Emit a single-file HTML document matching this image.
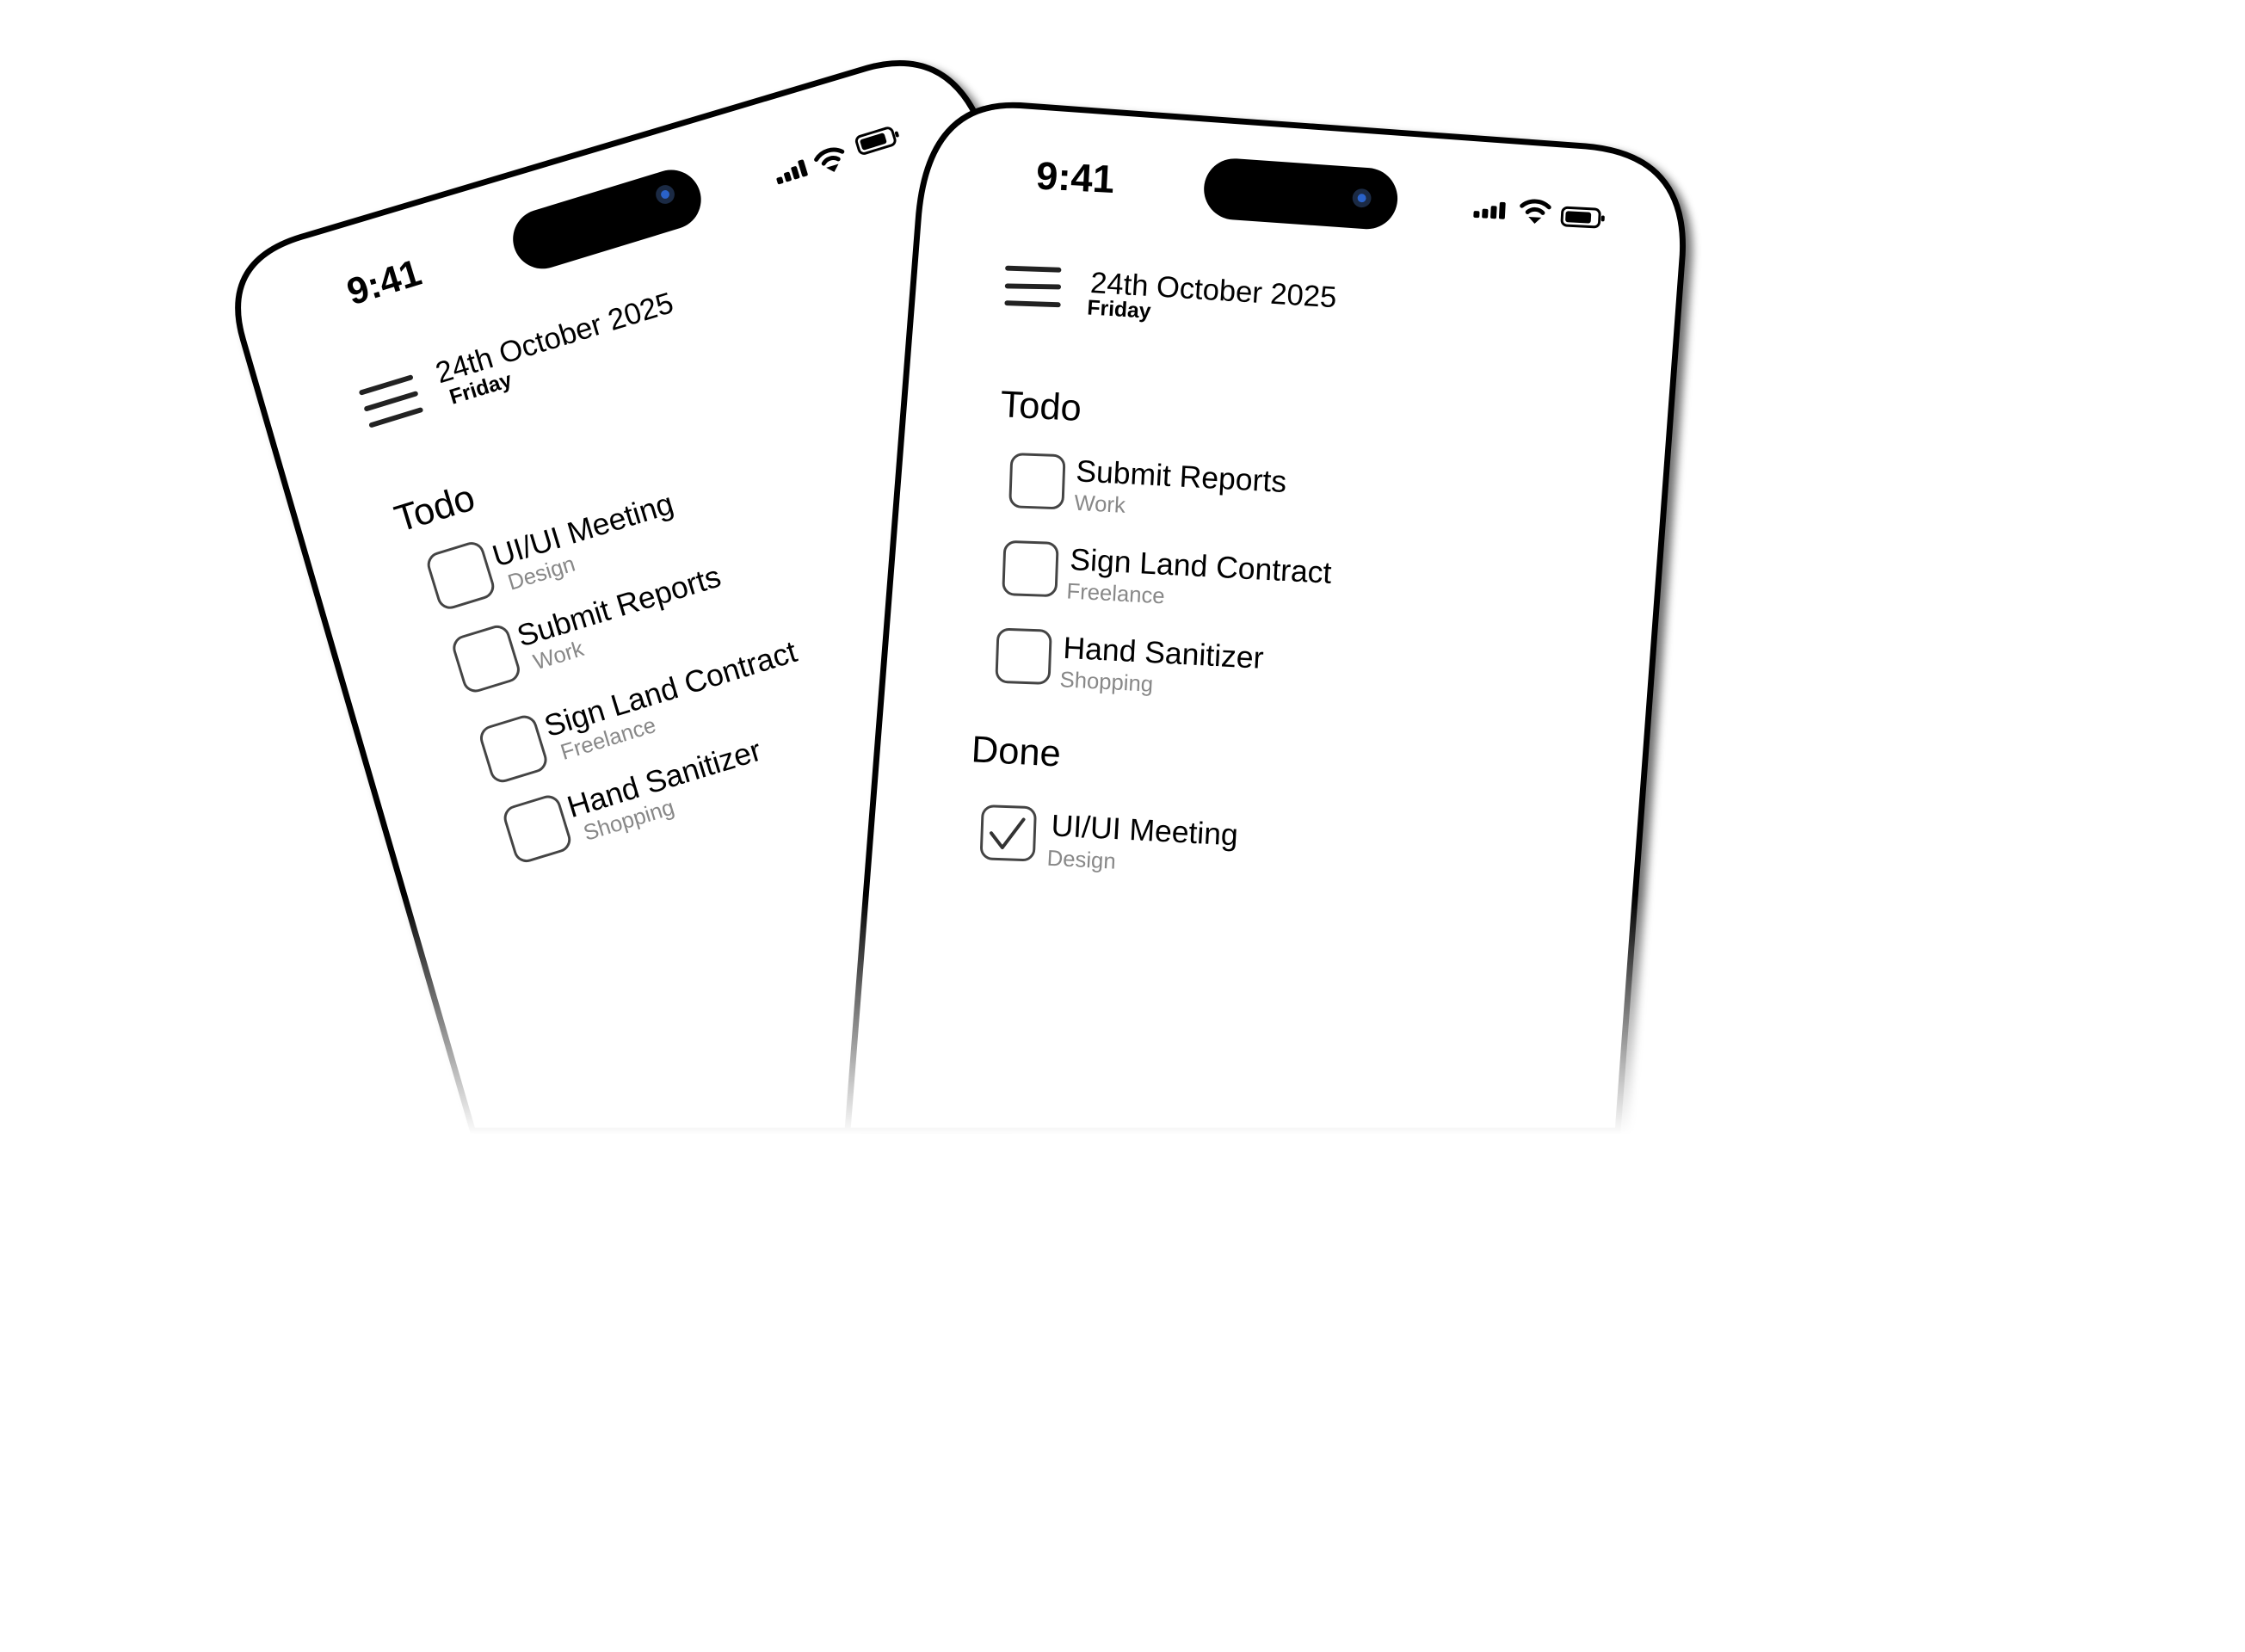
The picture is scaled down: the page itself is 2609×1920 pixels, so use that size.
<!DOCTYPE html>
<html><head><meta charset="utf-8"><style>
html,body{margin:0;padding:0;background:#fff;width:2609px;height:1920px;overflow:hidden}
svg{display:block}
text{font-family:"Liberation Sans",sans-serif}
</style></head><body>
<svg width="2609" height="1920" viewBox="0 0 2609 1920" xmlns="http://www.w3.org/2000/svg">
<defs>
<filter id="sh" x="-10%" y="-10%" width="130%" height="130%">
<feGaussianBlur in="SourceAlpha" stdDeviation="5"/><feOffset dx="8" dy="6"/>
<feComponentTransfer><feFuncA type="linear" slope="0.55"/></feComponentTransfer>
<feMerge><feMergeNode/><feMergeNode in="SourceGraphic"/></feMerge></filter>
<linearGradient id="fade" x1="0" y1="0" x2="0" y2="1">
<stop offset="0" stop-color="#fff" stop-opacity="0"/><stop offset="1" stop-color="#fff" stop-opacity="1"/></linearGradient>
<g id="sig"><rect x="0" y="10" width="7" height="8" rx="2"/><rect x="10" y="7" width="7" height="11" rx="2"/><rect x="20" y="3" width="7" height="15" rx="2"/><rect x="30" y="-2" width="7" height="20" rx="2"/></g>
<g id="wifi" fill="none" stroke="#000" stroke-width="5" stroke-linecap="round"><path d="M-16,-2 A24,24 0 0 1 16,-2"/><path d="M-9,5 A13,13 0 0 1 9,5"/><path d="M-4,12 L0,16 L4,12 Z" fill="#000" stroke-width="3"/></g>
<g id="bat"><rect x="0" y="0" width="44" height="21" rx="6" fill="none" stroke="#000" stroke-width="3"/><rect x="4" y="4" width="30" height="13" rx="3"/><rect x="46" y="7" width="4" height="7" rx="2"/></g>
</defs>
<g transform="scale(0.988)">
<!-- LEFT PHONE -->
<path filter="url(#sh)" d="M556,1330 L286,400 Q258,305 360,277 L1020,80 Q1110,55 1150,140 L1190,1330 Z" fill="#fff" stroke="#000" stroke-width="7"/>
<g transform="rotate(-17 714 258)"><rect x="600" y="223" width="228" height="70" rx="35" fill="#000"/><circle cx="788" cy="250" r="11" fill="#1b2a44"/><circle cx="788" cy="250" r="5" fill="#2a62c9"/></g>
<text x="414" y="359" font-size="44" font-weight="bold" transform="rotate(-17 414 359)">9:41</text>
<use href="#sig" transform="translate(910,200) rotate(-17)"/>
<use href="#wifi" transform="translate(976,185) rotate(-17)"/>
<use href="#bat" transform="translate(1006,162) rotate(-17)"/>
<g transform="translate(460,472) rotate(-17)" stroke="#222" stroke-width="6" stroke-linecap="round"><line x1="-30" y1="-20" x2="30" y2="-20"/><line x1="-30" y1="0" x2="30" y2="0"/><line x1="-30" y1="20" x2="30" y2="20"/></g>
<g transform="rotate(-17 517 451)"><text x="517" y="451" font-size="35">24th October 2025</text><text x="524" y="479" font-size="25" font-weight="bold">Friday</text></g>
<text x="470" y="626" font-size="44" transform="rotate(-17 470 626)">Todo</text>
<g fill="none" stroke="#444" stroke-width="3">
<rect x="-33" y="-33" width="66" height="66" rx="14" transform="translate(542,677) rotate(-17)"/>
<rect x="-33" y="-33" width="66" height="66" rx="14" transform="translate(572,775) rotate(-17)"/>
<rect x="-33" y="-33" width="66" height="66" rx="14" transform="translate(604,881) rotate(-17)"/>
<rect x="-33" y="-33" width="66" height="66" rx="14" transform="translate(632,975) rotate(-17)"/>
</g>
<g transform="rotate(-17 584 667)"><text x="584" y="667" font-size="36">UI/UI Meeting</text><text x="592" y="698" font-size="26" fill="#888">Design</text></g>
<g transform="rotate(-17 613 761)"><text x="613" y="761" font-size="36">Submit Reports</text><text x="622" y="792" font-size="26" fill="#888">Work</text></g>
<g transform="rotate(-17 645 867)"><text x="645" y="867" font-size="36">Sign Land Contract</text><text x="654" y="898" font-size="26" fill="#888">Freelance</text></g>
<g transform="rotate(-17 672 962)"><text x="672" y="962" font-size="36">Hand Sanitizer</text><text x="681" y="993" font-size="26" fill="#888">Shopping</text></g>

<!-- RIGHT PHONE -->
<path filter="url(#sh)" d="M997,1330 L1080,260 Q1090,118 1200,124 L1865,172 Q1985,182 1979,300 L1903,1330 Z" fill="#fff" stroke="#000" stroke-width="7"/>
<g transform="rotate(4 1530 228)"><rect x="1416" y="192" width="228" height="72" rx="36" fill="#000"/><circle cx="1602" cy="228" r="11" fill="#1b2a44"/><circle cx="1602" cy="228" r="5" fill="#2a62c9"/></g>
<text x="1218" y="222" font-size="46" font-weight="bold" transform="rotate(3 1218 222)">9:41</text>
<use href="#sig" transform="translate(1734,238) rotate(3)"/>
<use href="#wifi" transform="translate(1806,245) rotate(3)"/>
<use href="#bat" transform="translate(1838,244) rotate(3)"/>
<g transform="translate(1215,337) rotate(1)" stroke="#222" stroke-width="6" stroke-linecap="round"><line x1="-30" y1="-21" x2="30" y2="-20"/><line x1="-30" y1="0" x2="30" y2="0"/><line x1="-30" y1="20" x2="30" y2="21"/></g>
<g transform="rotate(3.5 1282 344)"><text x="1282" y="344" font-size="35">24th October 2025</text><text x="1280" y="370" font-size="25" font-weight="bold">Friday</text></g>
<text x="1176" y="490" font-size="44" transform="rotate(3 1176 490)">Todo</text>
<g fill="none" stroke="#444" stroke-width="3">
<rect x="-31" y="-31" width="62" height="62" rx="13" transform="translate(1220,566) rotate(2)"/>
<rect x="-31" y="-31" width="62" height="62" rx="13" transform="translate(1212,669) rotate(2)"/>
<rect x="-31" y="-31" width="62" height="62" rx="13" transform="translate(1204,772) rotate(2)"/>
<rect x="-31" y="-31" width="62" height="62" rx="13" transform="translate(1186,980) rotate(2)"/>
</g>
<path d="M1166,980 L1179,997 L1204,964" fill="none" stroke="#333" stroke-width="4" stroke-linecap="round" stroke-linejoin="round"/>
<g transform="rotate(3 1265 566)"><text x="1265" y="566" font-size="36">Submit Reports</text><text x="1265" y="600" font-size="26" fill="#888">Work</text></g>
<g transform="rotate(3 1258 670)"><text x="1258" y="670" font-size="36">Sign Land Contract</text><text x="1256" y="704" font-size="26" fill="#888">Freelance</text></g>
<g transform="rotate(3 1250 774)"><text x="1250" y="774" font-size="36">Hand Sanitizer</text><text x="1248" y="808" font-size="26" fill="#888">Shopping</text></g>
<text x="1142" y="896" font-size="44" transform="rotate(3 1142 896)">Done</text>
<g transform="rotate(3 1236 983)"><text x="1236" y="983" font-size="36">UI/UI Meeting</text><text x="1233" y="1018" font-size="26" fill="#888">Design</text></g>
</g>
<rect x="0" y="1040" width="2609" height="280" fill="url(#fade)"/>
<rect x="0" y="1318" width="2609" height="602" fill="#fff"/>
</svg>
</body></html>
